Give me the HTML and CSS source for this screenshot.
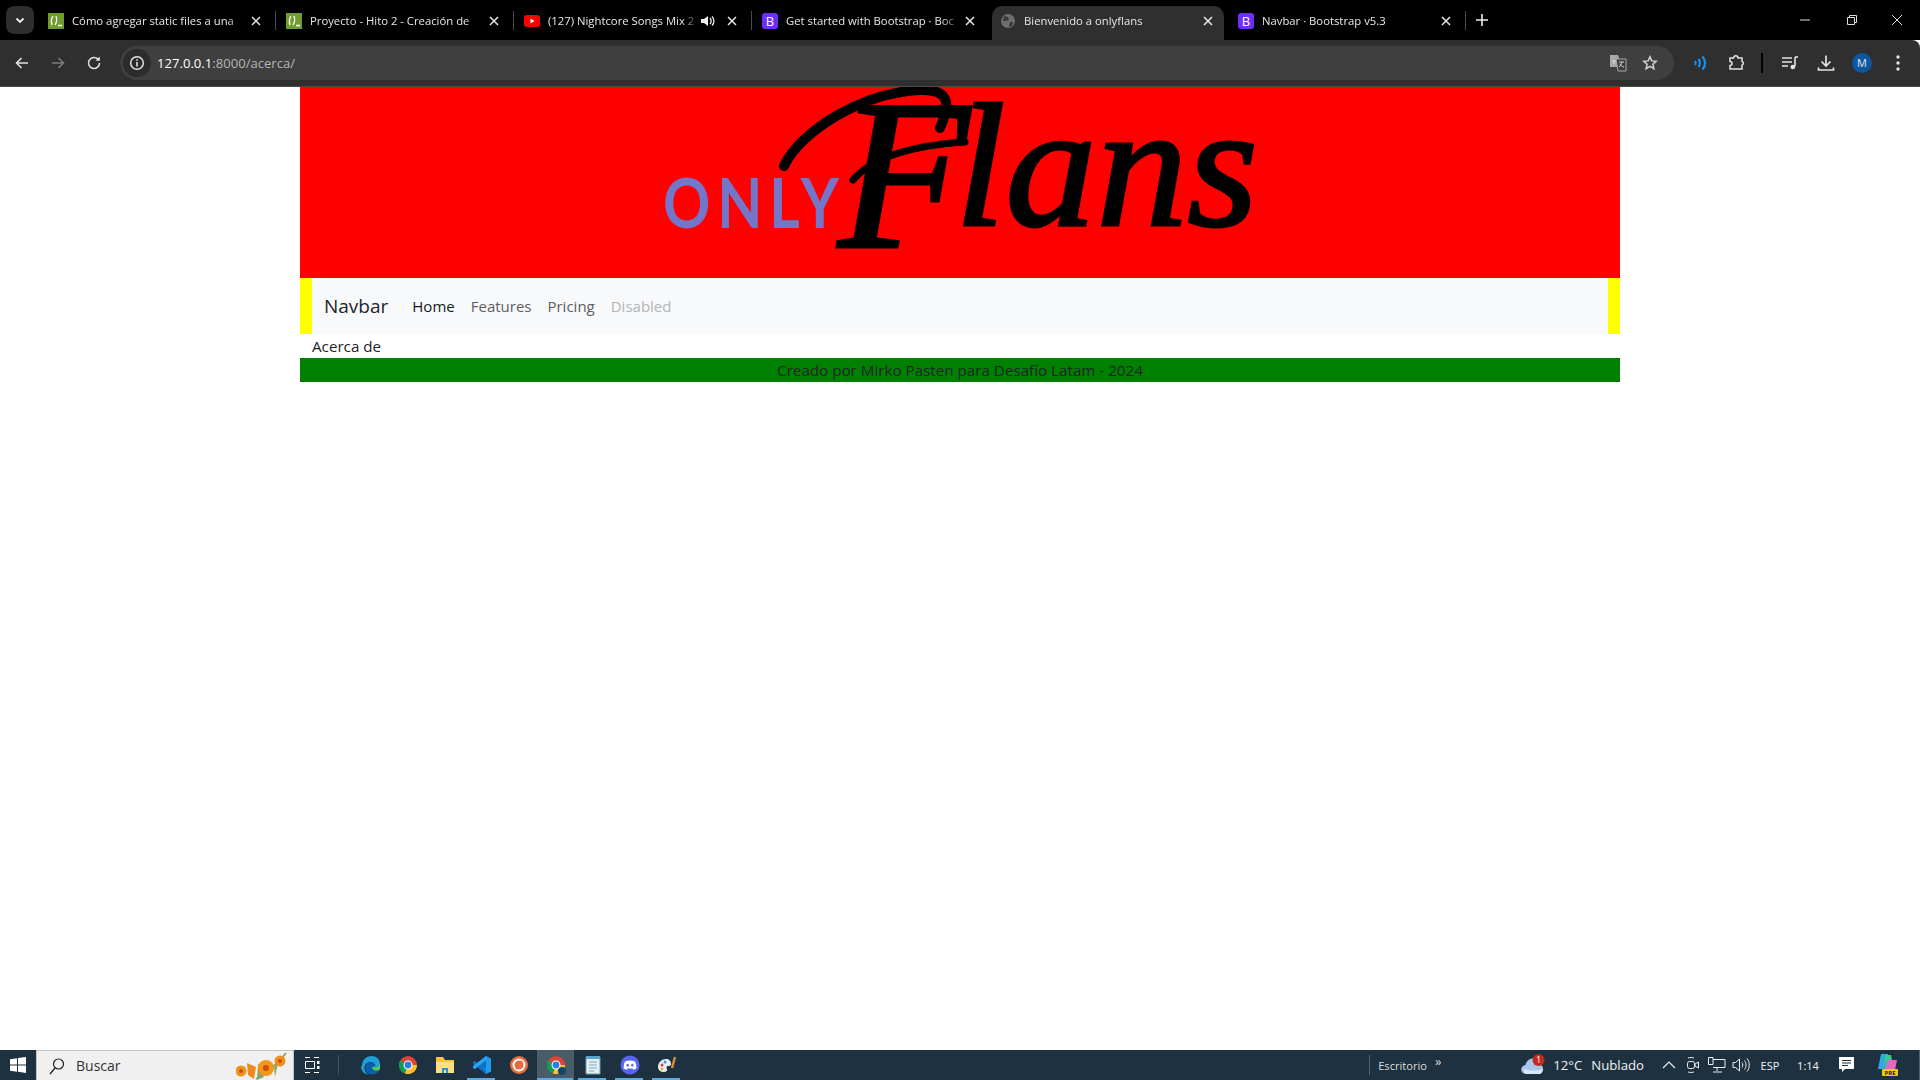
FILE: index.html
```html
<!DOCTYPE html>
<html lang="es">

<head>
  <meta charset="UTF-8">
  <title>Bienvenido a onlyflans</title>
  <link rel="stylesheet" href="styles.css">
</head>

<body>
  <svg class="defs" width="0" height="0">
    <symbol id="fav-django" viewBox="0 0 16 16">
      <rect width="16" height="16" fill="#6f9e2e"/>
      <path d="M5 3C3 6 3 9 4 12M8 3c1 3 1 6-1 9M10 12.500h4" fill="none" stroke="#fff" stroke-width="1.300"/>
    </symbol>
    <symbol id="icon-close" viewBox="0 0 16 16">
      <path d="M4 4l8 8M12 4l-8 8" stroke="#e8e8e8" stroke-width="1.500"/>
    </symbol>
    <symbol id="icon-chrome" viewBox="0 0 20 20">
      <circle cx="10" cy="10" r="9" fill="#db4437"/>
      <path d="M10 10L2.200 5.500A9 9 0 0 0 7 18.500z" fill="#0f9d58"/>
      <path d="M10 10h9A9 9 0 0 1 7 18.500z" fill="#fbc02d"/>
      <circle cx="10" cy="10" r="4.500" fill="#fff"/>
      <circle cx="10" cy="10" r="3.400" fill="#2a7de1"/>
    </symbol>
  </svg>

  <header class="browser">
    <div class="tabstrip">
      <div class="tab-search">
        <svg width="12" height="12" viewBox="0 0 12 12"><path d="M2.500 4.500L6 8l3.500-3.500" fill="none" stroke="#eee" stroke-width="1.800"/></svg>
      </div>
      <div class="tab">
        <svg class="favicon"><use href="#fav-django"/></svg>
        <span class="tab-title">Cómo agregar static files a una</span>
        <svg class="tab-close"><use href="#icon-close"/></svg>
      </div>
      <div class="tab">
        <svg class="favicon"><use href="#fav-django"/></svg>
        <span class="tab-title">Proyecto - Hito 2 - Creación de</span>
        <svg class="tab-close"><use href="#icon-close"/></svg>
      </div>
      <div class="tab">
        <svg class="favicon" viewBox="0 0 16 16"><rect y="2" width="16" height="12" rx="3" fill="#f00"/><path d="M6.500 5.500v5l4-2.500z" fill="#fff"/></svg>
        <span class="tab-title">(127) Nightcore Songs Mix 2</span>
        <svg class="tab-sound" viewBox="0 0 16 16"><path d="M1 6v4h3l4 3V3L4 6z" fill="#eee"/><path d="M10 5c1.500 1.500 1.500 4.500 0 6M12 3.500c2.500 2.500 2.500 6.500 0 9" fill="none" stroke="#eee" stroke-width="1.300"/></svg>
        <svg class="tab-close"><use href="#icon-close"/></svg>
      </div>
      <div class="tab tab-last-sep">
        <span class="favicon fav-bs">B</span>
        <span class="tab-title">Get started with Bootstrap · Boc</span>
        <svg class="tab-close"><use href="#icon-close"/></svg>
      </div>
      <div class="tab tab-active">
        <svg class="favicon" viewBox="0 0 16 16"><circle cx="8" cy="8" r="7" fill="#6e6e6e"/><path d="M4 3l4 1 1 3-3 1-3 0zM10 9l3 0-1 4-3 1z" fill="#3a3a3a"/></svg>
        <span class="tab-title">Bienvenido a onlyflans</span>
        <svg class="tab-close"><use href="#icon-close"/></svg>
      </div>
      <div class="tab">
        <span class="favicon fav-bs">B</span>
        <span class="tab-title">Navbar · Bootstrap v5.3</span>
        <svg class="tab-close"><use href="#icon-close"/></svg>
      </div>
      <svg class="new-tab" width="16" height="16" viewBox="0 0 16 16"><path d="M8 2v12M2 8h12" stroke="#eee" stroke-width="1.600"/></svg>
      <div class="window-controls">
        <svg width="46" height="16" viewBox="0 0 46 16"><path d="M18 8h10" stroke="#ddd"/></svg>
        <svg width="46" height="16" viewBox="0 0 46 16"><path d="M19.500 5.500h7v7h-7zM21.500 5.500v-2h7v7h-2" fill="none" stroke="#ddd"/></svg>
        <svg width="46" height="16" viewBox="0 0 46 16"><path d="M18 3l10 10M28 3L18 13" stroke="#ddd"/></svg>
      </div>
    </div>

    <div class="toolbar">
      <div class="tool"><svg width="16" height="16" viewBox="0 0 16 16"><path d="M14 8H2.500M7.500 3l-5 5 5 5" fill="none" stroke="#e3e3e3" stroke-width="1.600"/></svg></div>
      <div class="tool"><svg width="16" height="16" viewBox="0 0 16 16"><path d="M2 8h11.500M8.500 3l5 5-5 5" fill="none" stroke="#7c7c7c" stroke-width="1.600"/></svg></div>
      <div class="tool"><svg width="16" height="16" viewBox="0 0 16 16"><path d="M13.500 8A5.500 5.500 0 1 1 12 4.200" fill="none" stroke="#e3e3e3" stroke-width="1.600"/><path d="M13.800 1.500v4.300H9.500z" fill="#e3e3e3"/></svg></div>
      <div class="omnibox">
        <div class="site-chip"><svg width="16" height="16" viewBox="0 0 16 16"><circle cx="8" cy="8" r="6.300" fill="none" stroke="#e3e3e3" stroke-width="1.500"/><path d="M8 7v4.500M8 4.300v1.500" stroke="#e3e3e3" stroke-width="1.600"/></svg></div>
        <span class="url">127.0.0.1<span class="url-dim">:8000/acerca/</span></span>
        <div class="omni-icon"><svg width="18" height="18" viewBox="0 0 18 18"><path d="M1 1h8l1 3v9H1z" fill="#a8a8a8"/><path d="M7 5h10v12H9z" fill="#3f3f3f" stroke="#a8a8a8"/><path d="M3 7h4M5 6v4M10 8h5M12.500 8c0 2-1 4-2.500 5M11 10c1 1.500 2 2.500 4 3" fill="none" stroke="#ddd" stroke-width=".9"/></svg></div>
        <div class="omni-icon"><svg width="16" height="16" viewBox="0 0 16 16"><path d="M8 1.800l1.800 4.100 4.500.4-3.400 3 1 4.400L8 11.400l-3.900 2.300 1-4.400-3.400-3 4.500-.4z" fill="none" stroke="#d5d5d5" stroke-width="1.500"/></svg></div>
      </div>
      <div class="tool"><svg width="16" height="18" viewBox="0 0 16 18"><path d="M3 7c.8 1.300.8 2.700 0 4M6.500 5c1.800 2.600 1.800 5.400 0 8M10.500 2.500c3.200 4 3.200 9 0 13" fill="none" stroke="#1a8fe8" stroke-width="2.200"/></svg></div>
      <div class="tool"><svg width="18" height="18" viewBox="0 0 18 18"><path d="M3 4h3.500a2.200 2.200 0 0 1 4.500 0H15v3.500a1.800 1.800 0 0 1 0 3.500v4H3v-3.500a2 2 0 0 0 0-4z" fill="none" stroke="#e3e3e3" stroke-width="1.500"/></svg></div>
      <div class="tool-sep"></div>
      <div class="tool"><svg width="18" height="18" viewBox="0 0 18 18"><path d="M1 4h10M1 8h10M1 12h6" stroke="#e3e3e3" stroke-width="1.500"/><path d="M14 3v9.500" stroke="#e3e3e3" stroke-width="1.600"/><path d="M14 3h3" stroke="#e3e3e3" stroke-width="1.600"/><circle cx="11.800" cy="13" r="2.300" fill="#e3e3e3"/></svg></div>
      <div class="tool"><svg width="18" height="18" viewBox="0 0 18 18"><path d="M9 1.500v10M4.500 7.500L9 12l4.500-4.500M1.500 13.500v2.500h15v-2.500" fill="none" stroke="#e3e3e3" stroke-width="1.700"/></svg></div>
      <div class="tool"><span class="avatar">M</span></div>
      <div class="tool"><svg width="6" height="18" viewBox="0 0 6 18"><circle cx="3" cy="3" r="1.700" fill="#e3e3e3"/><circle cx="3" cy="9" r="1.700" fill="#e3e3e3"/><circle cx="3" cy="15" r="1.700" fill="#e3e3e3"/></svg></div>
    </div>
  </header>

  <main class="viewport">
    <div class="container">
      <div class="banner">
        <svg class="logo" viewBox="300 87 1320 191" width="1320" height="191">
          <text class="logo-only" transform="translate(663 228) scale(.85 1)">ONLY</text>
          <path class="logo-swash" d="M784 166C800 132 860 93 920 90C948 89 952 102 940 128"/>
          <path class="logo-swash logo-swash-thin" d="M853 180C870 160 905 146 965 142"/>
          <text class="logo-flans" x="838" y="247" font-size="215">F</text>
          <text class="logo-flans" x="955" y="225" font-size="176" textLength="303" lengthAdjust="spacingAndGlyphs">lans</text>
        </svg>
      </div>
      <div class="navbar-wrap">
        <nav class="navbar">
          <a class="brand">Navbar</a>
          <a class="nav-link nav-link-active">Home</a>
          <a class="nav-link">Features</a>
          <a class="nav-link">Pricing</a>
          <a class="nav-link nav-link-disabled">Disabled</a>
        </nav>
      </div>
      <p class="content">Acerca de</p>
      <footer class="site-footer">Creado por Mirko Pasten para Desafío Latam - 2024</footer>
    </div>
  </main>

  <footer class="taskbar">
    <div class="start">
      <svg width="16" height="16" viewBox="0 0 16 16"><path d="M0 2.200l7-1v6.400H0zM8 1l8-1v7.600H8zM0 8.500h7v6.300l-7-1zM8 8.500h8V16l-8-1.200z" fill="#fff"/></svg>
    </div>
    <div class="search">
      <svg width="18" height="18" viewBox="0 0 18 18"><circle cx="10.500" cy="7" r="5" fill="none" stroke="#222" stroke-width="1.200"/><path d="M7 11l-5 6" stroke="#222" stroke-width="1.300"/></svg>
      <span class="search-text">Buscar</span>
      <svg class="flowers" width="52" height="30" viewBox="0 0 52 30">
        <path d="M20 28C28 22 40 16 50 2" fill="none" stroke="#7d9a56" stroke-width="1.500"/>
        <path d="M22 12l6 14-7 3zM38 16l4-4-3 14z" fill="#8ea56a"/>
        <circle cx="5" cy="20" r="5.500" fill="#f0901e"/><circle cx="5" cy="20" r="2" fill="#c4500f"/>
        <path d="M11 12l9 4-2 12-6-4z" fill="#ee8a1a"/>
        <circle cx="30" cy="17" r="8" fill="#f5961c"/><circle cx="30" cy="17" r="3" fill="#c9500c"/>
        <circle cx="44" cy="10" r="5.500" fill="#f0901e"/><circle cx="44" cy="10" r="2" fill="#c4500f"/>
      </svg>
    </div>
    <div class="task-view">
      <svg width="16" height="16" viewBox="0 0 16 16"><path d="M1 .5h5M10 .5h5M1 15.500h5M10 15.500h5" stroke="#fff"/><path d="M1.500 4.500h9v7h-9z" fill="none" stroke="#fff"/><path d="M13 4h2.500v3H13zM13 9h2.500v3H13z" fill="#fff"/></svg>
    </div>
    <div class="task-sep"></div>
    <div class="task-apps">
      <div class="app">
        <svg width="20" height="20" viewBox="0 0 20 20"><path d="M1 11C1 4 6 1 10.500 1c5 0 8.500 3.500 8.500 8 0 3-2.500 4-4.500 4-2 0-3-.8-3-1.500 2 .5 2.500-1.500 1-3-2.500-2.500-9-1.500-9 5 0 3 2 5 4 6-4.500 0-7.500-4-7.500-8.500z" fill="#1e9fd8"/><path d="M4.500 13.500c0-6.500 6.500-7.500 9-5 1.500 1.500 1 3.500-1 3-1 2 1.500 5.500 6 3.500-1.500 3-4.500 4.500-7.500 4.500-3.500 0-6.500-2.500-6.500-6z" fill="#0a5fa8"/><path d="M11.500 11.500c-1 2 1.500 5.500 7 3.500 0 0 1-2 .5-6-1 3-4 4.500-7.500 2.500z" fill="#5ac85a"/></svg>
      </div>
      <div class="app"><svg width="20" height="20"><use href="#icon-chrome"/></svg></div>
      <div class="app">
        <svg width="20" height="18" viewBox="0 0 20 18"><path d="M1 1h7l2 3h9v13H1z" fill="#f5c53d"/><path d="M1 6h18v11H1z" fill="#fde081"/><path d="M7 17v-5h6v5h-2v-3H9v3z" fill="#2b8fd8"/></svg>
      </div>
      <div class="app app-running">
        <svg width="20" height="20" viewBox="0 0 20 20"><path d="M14 1l5 2.500v13L14 19 5.500 11z" fill="#1f9cf0"/><path d="M14 5.500v9L8 10zM1 7l2-1 11 9.500V19L1 9z" fill="#0a6fc2"/><path d="M1 13l2 1L14 4.500V1L1 11z" fill="#2aa5f5"/></svg>
      </div>
      <div class="app">
        <svg width="20" height="20" viewBox="0 0 20 20"><circle cx="10" cy="10" r="9" fill="#e96a3a"/><circle cx="10" cy="10" r="5.500" fill="none" stroke="#fff" stroke-width="2"/><path d="M7 14l6-8" stroke="#e96a3a" stroke-width="2"/></svg>
      </div>
      <div class="app app-running app-active">
        <svg width="20" height="20"><use href="#icon-chrome"/></svg>
        <span class="app-badge"></span>
      </div>
      <div class="app app-running">
        <svg width="18" height="20" viewBox="0 0 18 20"><path d="M2 2h14v17H2z" fill="#dff2f7" stroke="#6d9cab"/><path d="M2 1h14v3H2z" fill="#59a7c4"/><path d="M5 7h8M5 10h8M5 13h8M5 16h5" stroke="#8aa6b0"/></svg>
      </div>
      <div class="app app-running">
        <svg width="20" height="20" viewBox="0 0 20 20"><circle cx="10" cy="10" r="9.500" fill="#5865f2"/><path d="M5 6.500c3-1.300 7-1.300 10 0 1.200 2.300 1.500 4.800 1.300 7-1 .7-2 1.100-3 1.300l-.8-1.300h-5l-.8 1.300c-1-.2-2-.6-3-1.300-.2-2.200.1-4.700 1.300-7z" fill="#fff"/><circle cx="7.700" cy="10.300" r="1.300" fill="#5865f2"/><circle cx="12.300" cy="10.300" r="1.300" fill="#5865f2"/></svg>
      </div>
      <div class="app app-running">
        <svg width="20" height="20" viewBox="0 0 20 20"><path d="M1 12c0-5 4-8 8-8 3 0 5 2 5 5 0 2-2 2-3 2-1.500 0-2 1.500-1 3 .6 1.200-.5 3-3 3-3.500 0-6-2-6-5z" fill="#e8eef2"/><circle cx="5" cy="10" r="1.500" fill="#e0453a"/><circle cx="8" cy="7" r="1.500" fill="#3a9be0"/><circle cx="5" cy="14" r="1.500" fill="#f2b23a"/><path d="M15 13l3-11" stroke="#d68a3c" stroke-width="2.500"/></svg>
      </div>
    </div>

    <div class="tray">
      <div class="desk">
        <span class="desk-label">Escritorio</span>
        <span class="desk-more">»</span>
      </div>
      <div class="weather">
        <svg width="24" height="22" viewBox="0 0 24 22"><path d="M5 20a4.500 4.500 0 0 1-.5-9C5.500 6.500 9 4 12.500 4.500c4 .5 6 3.500 6.500 6 4 1 4.500 8-.5 9.500z" fill="#a9c7ea"/><path d="M3 15c6 2 12 2 19 0-.5 3-2 5-3.500 5H5c-1.500 0-2-2.500-2-5z" fill="#dbe8f6"/><circle cx="17.500" cy="6" r="6" fill="#c4281c"/><text class="weather-badge" x="17.500" y="9">1</text></svg>
        <span class="weather-temp">12°C</span>
        <span class="weather-text">Nublado</span>
      </div>
      <div class="tray-cell tray-chevron"><svg width="14" height="8" viewBox="0 0 14 8"><path d="M1 7l6-6 6 6" fill="none" stroke="#eee" stroke-width="1.200"/></svg></div>
      <div class="tray-cell"><svg width="14" height="16" viewBox="0 0 14 16"><path d="M2 1c2-.6 4-.6 6 0M2 15c2 .6 4 .6 6 0" fill="none" stroke="#eee"/><rect x="1.500" y="4.500" width="7" height="7" rx="2" fill="none" stroke="#eee"/><path d="M9 7l3.500-2v6L9 9z" fill="none" stroke="#eee"/></svg></div>
      <div class="tray-cell tray-net"><svg width="18" height="16" viewBox="0 0 18 16"><path d="M.5.500h4.500v7H.5zM5 2.500h12v8H5M9 10.500v3.500M5 15h9" fill="none" stroke="#eee"/></svg></div>
      <div class="tray-cell tray-sound"><svg width="18" height="16" viewBox="0 0 18 16"><path d="M1 5.500v5h2.500L7.500 14V2L3.500 5.500z" fill="none" stroke="#eee"/><path d="M10 5.500c1 1.500 1 3.500 0 5M12.500 3.500c2 2.500 2 6.500 0 9M15 1.500c3 3.500 3 9.500 0 13" fill="none" stroke="#eee"/></svg></div>
      <div class="tray-cell tray-lang">ESP</div>
      <div class="tray-cell tray-time">1:14</div>
      <div class="tray-cell tray-notif"><svg width="18" height="18" viewBox="0 0 18 18"><path d="M1 1h15v12H7l-3 3v-3H1z" fill="#fff"/><path d="M4 4.500h9M4 7h9M4 9.500h6" stroke="#1d3140"/></svg></div>
      <div class="tray-cell tray-copilot">
        <svg width="22" height="24" viewBox="0 0 22 24"><path d="M4 1h7L9 16H1z" fill="#2ea9e6"/><path d="M8 2h6l1 5-7 7z" fill="#3ac98a"/><path d="M11 7h9l-2 10H8z" fill="#e765c4"/><rect x="5" y="16" width="16" height="7" rx="1" fill="#f5c518"/><text class="copilot-pre" x="13" y="22">PRE</text></svg>
      </div>
      <div class="tray-end"></div>
    </div>
  </footer>
</body>

</html>
```

FILE: styles.css
```css
html,
body {
  height: 100%;
  margin: 0;
  overflow: hidden;
}

body {
  display: flex;
  flex-direction: column;
  font-family: "Open Sans", "Liberation Sans", sans-serif;
  background-color: #fff;
}

.defs {
  position: absolute;
}

/* browser window */
.browser {
  flex: none;
  color: #e8e8e8;
}

.tabstrip {
  display: flex;
  align-items: flex-end;
  height: 40px;
  background-color: #000;
}

.tab-search {
  display: flex;
  align-items: center;
  justify-content: center;
  width: 28px;
  height: 28px;
  margin: 0 6px 6px;
  border-radius: 8px;
  background-color: #2e2e2e;
}

.tab {
  position: relative;
  display: flex;
  align-items: center;
  width: 232px;
  height: 34px;
  margin-right: 6px;
  padding: 0 8px 5px;
  box-sizing: border-box;
  border-radius: 10px 10px 0 0;
  font-size: 11.300px;
}

.tab::after {
  content: "";
  position: absolute;
  top: 5px;
  right: -4px;
  width: 1px;
  height: 19px;
  background-color: #4a4a4a;
}

.tab-last-sep::after {
  display: none;
}

.tab-active {
  background-color: #2f2f2f;
}

.tab-active::after {
  display: none;
}

.favicon {
  flex: none;
  width: 16px;
  height: 16px;
  margin-right: 8px;
}

.fav-bs {
  border-radius: 3px;
  background-color: #712cf9;
  color: #fff;
  font-size: 13px;
  line-height: 16px;
  text-align: center;
}

.tab-title {
  flex: 1;
  overflow: hidden;
  white-space: nowrap;
  -webkit-mask-image: linear-gradient(to right, #000 88%, transparent);
  mask-image: linear-gradient(to right, #000 88%, transparent);
}

.tab-sound {
  flex: none;
  width: 16px;
  height: 16px;
  margin-right: 8px;
}

.tab-close {
  flex: none;
  width: 16px;
  height: 16px;
}

.new-tab {
  margin: 0 0 12px 6px;
}

.window-controls {
  display: flex;
  margin: 0 0 12px auto;
}

.toolbar {
  display: flex;
  align-items: center;
  height: 46px;
  padding: 0 4px;
  border-bottom: 1px solid #4a4a4a;
  border-radius: 0 8px 0 0;
  background-color: #2f2f2f;
}

.tool {
  display: flex;
  flex: none;
  align-items: center;
  justify-content: center;
  width: 36px;
  height: 36px;
}

.tool-sep {
  flex: none;
  width: 2px;
  height: 20px;
  margin: 0 9px 0 7px;
  background-color: #000;
}

.omnibox {
  display: flex;
  flex: 1;
  align-items: center;
  height: 34px;
  margin: 0 8px;
  padding: 0 8px 0 3px;
  border-radius: 17px;
  background-color: #3f3f3f;
}

.site-chip {
  display: flex;
  align-items: center;
  justify-content: center;
  width: 28px;
  height: 28px;
  margin-right: 6px;
  border-radius: 50%;
  background-color: #2c2c2c;
}

.url {
  flex: 1;
  font-size: 13.100px;
  color: #fff;
}

.url-dim {
  color: #b4b4b4;
}

.omni-icon {
  display: flex;
  align-items: center;
  justify-content: center;
  width: 32px;
  height: 28px;
}

.avatar {
  width: 20px;
  height: 20px;
  border-radius: 50%;
  background-color: #0b57a4;
  color: #e8e8e8;
  font-size: 11px;
  line-height: 20px;
  text-align: center;
}

/* page */
.viewport {
  flex: 1;
  min-height: 0;
}

.container {
  width: 1320px;
  margin: 0 auto;
}

.banner {
  height: 191px;
  background-color: #f00;
}

.logo {
  display: block;
}

.logo-only {
  font-family: "Lato", sans-serif;
  font-size: 69px;
  font-weight: 700;
  letter-spacing: 8px;
  fill: #7376c9;
}

.logo-flans {
  font-family: "Liberation Serif", serif;
  font-style: italic;
  fill: #000;
  stroke: #000;
  stroke-width: 3px;
}

.logo-swash {
  fill: none;
  stroke: #000;
  stroke-width: 10;
  stroke-linecap: round;
}

.logo-swash-thin {
  stroke-width: 7;
}

.navbar-wrap {
  padding: 0 12px;
  background-color: #ff0;
}

.navbar {
  display: flex;
  align-items: center;
  height: 56px;
  padding: 0 12px;
  background-color: #f8f9fa;
}

.brand {
  margin-right: 16px;
  font-size: 19px;
  color: #212529;
}

.nav-link {
  padding: 0 8px;
  font-size: 15px;
  color: #5c5f63;
}

.nav-link-active {
  color: #16191c;
}

.nav-link-disabled {
  color: #b3b5b7;
}

.content {
  height: 24px;
  margin: 0;
  padding-left: 12px;
  font-size: 15.200px;
  line-height: 24px;
  color: #212529;
}

.site-footer {
  height: 24px;
  background-color: #008000;
  font-size: 15.200px;
  line-height: 24px;
  text-align: center;
  color: #212529;
}

/* windows taskbar */
.taskbar {
  display: flex;
  flex: none;
  align-items: center;
  height: 30px;
  background-color: #1d3140;
  color: #f2f2f2;
}

.start {
  display: flex;
  align-items: center;
  justify-content: center;
  width: 36px;
  height: 30px;
}

.search {
  display: flex;
  align-items: center;
  width: 258px;
  height: 30px;
  padding-left: 11px;
  box-sizing: border-box;
  border: 1px solid #c4c4c4;
  border-bottom: 0;
  background-color: #f0f0f0;
}

.search-text {
  flex: 1;
  margin-left: 10px;
  font-size: 14px;
  color: #333;
}

.flowers {
  margin-right: 5px;
}

.task-view {
  display: flex;
  align-items: center;
  justify-content: center;
  width: 36px;
  height: 30px;
}

.task-sep {
  flex: none;
  width: 14px;
  height: 20px;
  margin-left: 8px;
  border-left: 1px solid #44545f;
  box-sizing: border-box;
}

.task-apps {
  display: flex;
}

.app {
  position: relative;
  display: flex;
  align-items: center;
  justify-content: center;
  width: 37px;
  height: 30px;
}

.app-running::after {
  content: "";
  position: absolute;
  bottom: 0;
  left: 4px;
  right: 5px;
  height: 2px;
  background-color: #62a9dc;
}

.app-active {
  background-color: #4a5c68;
}

.app-active::after {
  left: 0;
  right: 1px;
}

.app-badge {
  position: absolute;
  top: 17px;
  left: 21px;
  width: 8px;
  height: 8px;
  border-radius: 50%;
  background-color: #12466e;
}

.tray {
  display: flex;
  align-items: center;
  height: 30px;
  margin-left: auto;
}

.desk {
  display: flex;
  align-items: center;
  width: 152px;
  height: 20px;
  padding-left: 8px;
  box-sizing: border-box;
  border-left: 1px solid #54636e;
  font-size: 11.100px;
  color: #dcdcdc;
}

.desk-more {
  margin: -8px 0 0 8px;
  font-size: 13px;
}

.weather {
  display: flex;
  align-items: center;
  font-size: 13.200px;
}

.weather-temp {
  margin: 0 9px 0 8px;
}

.weather-badge {
  font-size: 9px;
  text-anchor: middle;
  fill: #fff;
}

.tray-cell {
  display: flex;
  align-items: center;
  justify-content: center;
  width: 24px;
  height: 30px;
}

.tray-chevron {
  margin-left: 13px;
}

.tray-net {
  width: 23px;
}

.tray-sound {
  width: 25px;
}

.tray-lang {
  width: 34px;
  font-size: 11px;
}

.tray-time {
  width: 42px;
  font-size: 11px;
}

.tray-notif {
  width: 36px;
}

.tray-copilot {
  width: 46px;
}

.copilot-pre {
  font-size: 6px;
  font-weight: 700;
  text-anchor: middle;
  fill: #222;
}

.tray-end {
  width: 9px;
  height: 30px;
  border-right: 1px solid #54636e;
  box-sizing: border-box;
}
```
